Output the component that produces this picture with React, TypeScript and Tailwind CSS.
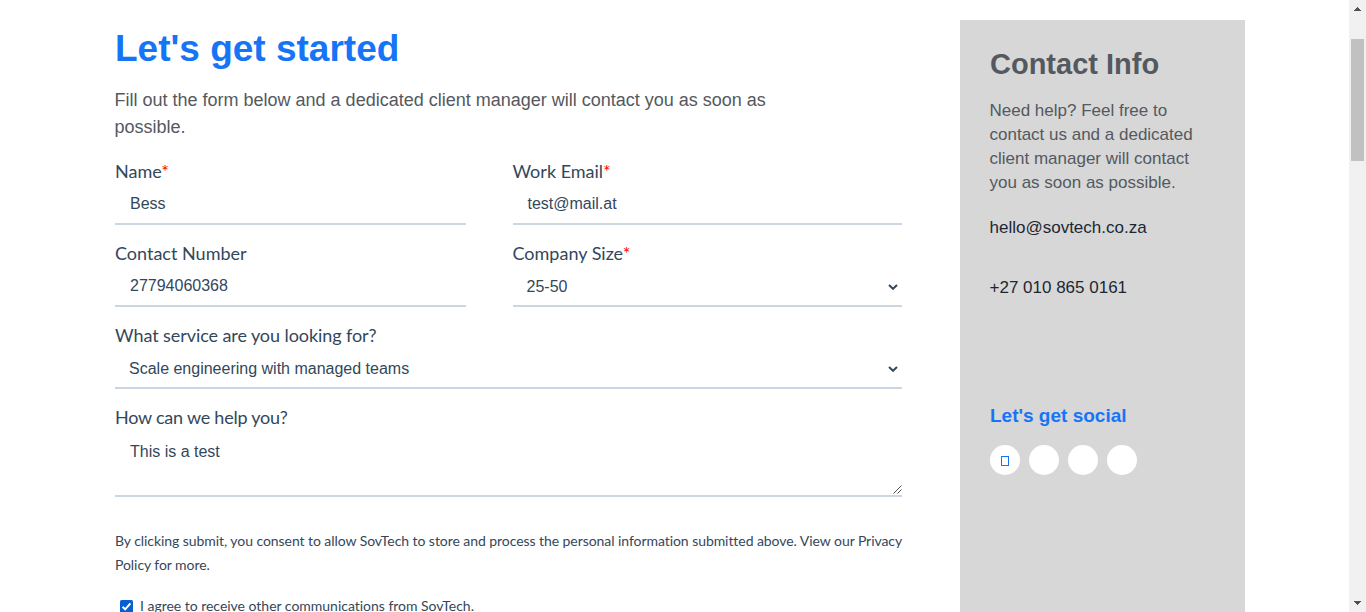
import type { ReactNode } from "react";

function Label({ children, required, className = "" }: { children: ReactNode; required?: boolean; className?: string }) {
  return (
    <div
      className={`h-[27px] whitespace-nowrap font-['Lato',sans-serif] text-[18px] leading-[27px] text-[#33475b] [font-variant-ligatures:none] ${className}`}
    >
      {children}
      {required && <span className="text-[#ff0000]">*</span>}
    </div>
  );
}

function Chevron() {
  return (
    <svg className="mr-1 mt-px h-[6px] w-[10px]" viewBox="0 0 10 6" fill="none">
      <path d="M1 1l4 3.8L9 1" stroke="#33475b" strokeWidth="2" />
    </svg>
  );
}

type FieldProps = { label: string; value: string; required?: boolean; select?: boolean; labelClass?: string };

function Field({ label, value, required, select, labelClass }: FieldProps) {
  return (
    <div className="h-[82px]">
      <Label required={required} className={labelClass}>
        {label}
      </Label>
      <div className="flex h-10 items-center justify-between border-b-2 border-[#cbd6e2] text-[16px] text-[#33475b]">
        <span className={select ? "pl-[14px] pt-[2px]" : "pl-[15px]"}>{value}</span>
        {select && <Chevron />}
      </div>
    </div>
  );
}

function ContactForm() {
  return (
    <main className="w-[787px] pt-[26px]">
      <h1 className="h-[46px] whitespace-nowrap text-[37px] font-bold leading-[46px] text-[#1675f6]">Let&apos;s get started</h1>
      <p className="-ml-[0.5px] mt-[15px] h-[54px] whitespace-nowrap text-[18px] leading-[27px] text-[#54595f]">
        Fill out the form below and a dedicated client manager will contact you as soon as
        <br />
        possible.
      </p>
      <div className="mt-[17px] grid grid-cols-[351px_389.5px] gap-x-[46.5px]">
        <Field label="Name" value="Bess" required />
        <Field label="Work Email" value="test@mail.at" required />
        <Field label="Contact Number" value="27794060368" />
        <Field label="Company Size" value="25-50" required select />
        <div className="col-span-2">
          <Field
            label="What service are you looking for?"
            value="Scale engineering with managed teams"
            labelClass="tracking-[-0.08px]"
            select
          />
        </div>
      </div>
      <Label className="tracking-[-0.23px]">How can we help you?</Label>
      <div className="flex h-[66px] justify-between border-b-2 border-[#cbd6e2] text-[16px] leading-6 text-[#33475b]">
        <span className="pl-[15px] pt-[9px]">This is a test</span>
        <svg className="mb-px h-[9px] w-[9px] self-end" viewBox="0 0 9 9" fill="none">
          <path d="M0.5 8.5l8-8M4.5 8.5l4-4" stroke="#555" />
        </svg>
      </div>
      <div className="mt-8 whitespace-nowrap font-['Lato',sans-serif] text-[14px] leading-6 text-[#33475b] [font-variant-ligatures:none]">
        <p className="tracking-[-0.06px]">
          By clicking submit, you consent to allow SovTech to store and process the personal information submitted above. View our Privacy
          <br />
          Policy for more.
        </p>
        <div className="mt-[17px] flex h-[22px] items-start pl-[5px]">
          <svg className="mt-[6px] h-[13px] w-[13px]" viewBox="0 0 13 13" fill="none">
            <rect width="13" height="13" rx="1.5" fill="#0560d0" />
            <path d="M2.6 6.8l2.6 2.6 5.2-6" stroke="white" strokeWidth="2" />
          </svg>
          <span className="ml-[7px] tracking-[-0.02px]">I agree to receive other communications from SovTech.</span>
        </div>
      </div>
    </main>
  );
}

function ContactInfo() {
  return (
    <aside className="mt-5 h-[592px] w-[285px] whitespace-nowrap bg-[#d7d7d7] pl-[30px] pt-[26px] text-[17px] leading-6">
      <h2 className="h-9 text-[29px] font-bold leading-9 text-[#54595f]">Contact Info</h2>
      <p className="-ml-[0.5px] mt-[17px] text-[#54595f]">
        Need help? Feel free to
        <br />
        contact us and a dedicated
        <br />
        client manager will contact
        <br />
        you as soon as possible.
      </p>
      <p className="-ml-[0.5px] mt-[21px] text-[#1c2733]">hello@sovtech.co.za</p>
      <p className="-ml-[0.5px] mt-9 text-[#1c2733]">+27 010 865 0161</p>
      <h3 className="mt-[104px] text-[19px] font-bold text-[#1675f6]">Let&apos;s get social</h3>
      <div className="mt-[17px] flex gap-[9px]">
        <span className="flex h-[30px] w-[30px] items-center justify-center rounded-full bg-white">
          <span className="mt-[2px] h-[10px] w-[8px] border border-[#1675f6]" />
        </span>
        <span className="h-[30px] w-[30px] rounded-full bg-white" />
        <span className="h-[30px] w-[30px] rounded-full bg-white" />
        <span className="h-[30px] w-[30px] rounded-full bg-white" />
      </div>
    </aside>
  );
}

function ScrollBar() {
  return (
    <div className="ml-auto flex h-[612px] w-[17px] flex-col items-center bg-[#f1f1f1]">
      <svg className="mt-[7px] h-1 w-[7px]" viewBox="0 0 7 4" shapeRendering="crispEdges">
        <path d="M3 0h1v1h1v1h1v1h1v1H0V3h1V2h1V1h1z" fill="#505050" />
      </svg>
      <div className="mt-[28px] h-[122px] w-[13px] bg-[#c1c1c1]" />
      <svg className="mb-[7px] mt-auto h-1 w-[7px]" viewBox="0 0 7 4" shapeRendering="crispEdges">
        <path d="M0 0h7v1H6v1H5v1H4v1H3V3H2V2H1V1H0z" fill="#505050" />
      </svg>
    </div>
  );
}

export default function App() {
  return (
    <div className="flex h-[612px] w-[1366px] overflow-hidden bg-white pl-[115px] font-['Liberation_Sans',Arial,sans-serif]">
      <ContactForm />
      <div className="ml-[58px]">
        <ContactInfo />
      </div>
      <ScrollBar />
    </div>
  );
}
